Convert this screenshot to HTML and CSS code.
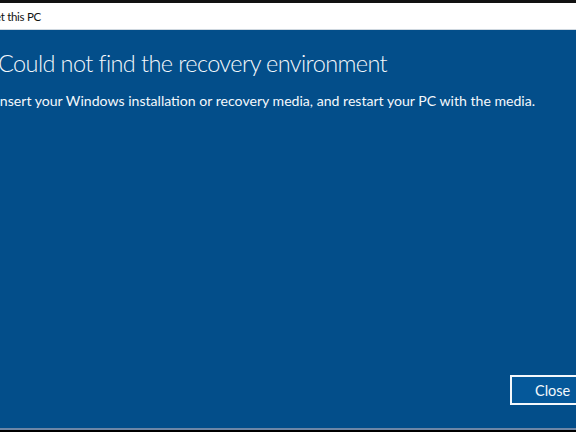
FILE: index.html
```html
<!DOCTYPE html>
<html>
<head>
<meta charset="utf-8">
<link rel="stylesheet" href="styles.css">
</head>
<body>
<div class="window">
  <div class="topedge"></div>
  <div class="titlebar"><span class="title">Reset this PC</span></div>
  <div class="content">
    <h1 class="heading">Could not find the recovery environment</h1>
    <p class="message">Insert your Windows installation or recovery media, and restart your PC with the media.</p>
    <div class="actions">
      <button class="btn">Close</button>
    </div>
  </div>
  <div class="bottomedge"></div>
</div>
</body>
</html>
```
FILE: styles.css
```css
html, body {
  margin: 0;
  padding: 0;
  width: 576px;
  height: 432px;
  overflow: hidden;
  background: #000;
}
.window {
  display: flex;
  flex-direction: column;
  height: 432px;
  font-family: "Lato", "Open Sans", sans-serif;
}
.topedge {
  height: 3px;
  background: #111;
}
.titlebar {
  height: 26px;
  background: #fff;
  border-bottom: 1px solid #cfd8e0;
  display: flex;
  align-items: center;
  overflow: hidden;
}
.title {
  margin-left: -22px;
  font-size: 11.5px;
  letter-spacing: -0.3px;
  color: #111;
  white-space: nowrap;
}
.content {
  flex: 1;
  background: #034e8a;
  color: #f4f8fc;
  display: flex;
  flex-direction: column;
  overflow: hidden;
}
.heading {
  margin: 17px 0 0 -2px;
  font-size: 23.5px;
  font-weight: 300;
  letter-spacing: -0.6px;
  line-height: 32px;
  white-space: nowrap;
}
.message {
  margin: 12px 0 0 -4px;
  font-size: 14.1px;
  line-height: 20px;
  white-space: nowrap;
}
.actions {
  margin-top: auto;
  display: flex;
  justify-content: flex-end;
  padding-bottom: 23px;
}
.btn {
  width: 78px;
  height: 30px;
  margin-right: -12px;
  background: #05589a;
  border: 2px solid #f4f8fc;
  color: #f4f8fc;
  font-family: "Lato", "Open Sans", sans-serif;
  font-size: 14.5px;
  padding: 0;
  text-align: left;
  padding-left: 23px;
}
.bottomedge {
  height: 2px;
  background: #6d86a6;
  border-bottom: 2px solid #000;
}
```
